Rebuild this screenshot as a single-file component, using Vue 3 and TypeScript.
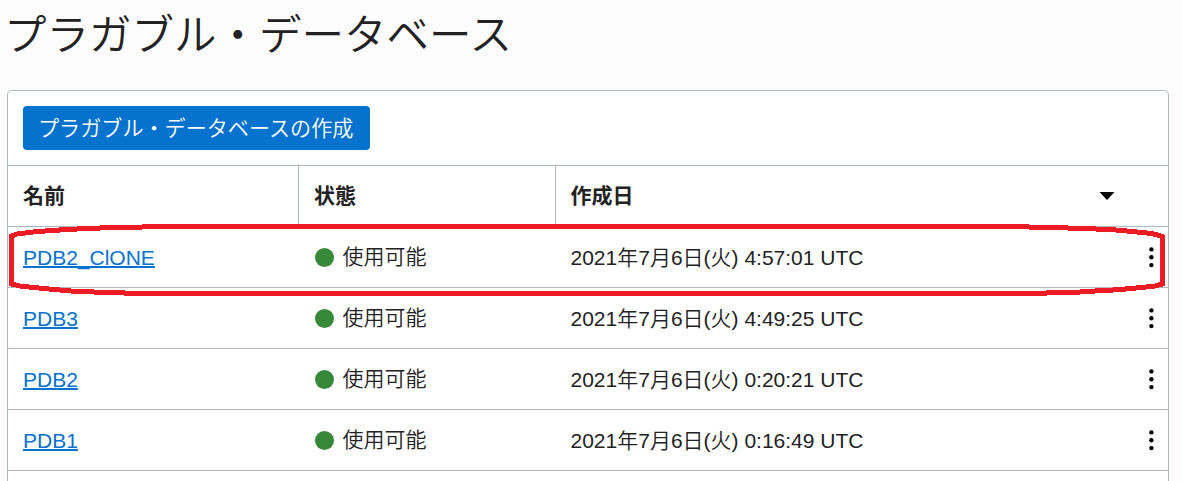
<script setup lang="ts">
interface PluggableDatabase {
  name: string
  state: string
  created: string
}

const databases: PluggableDatabase[] = [
  { name: 'PDB2_ClONE', state: '使用可能', created: '2021年7月6日(火) 4:57:01 UTC' },
  { name: 'PDB3', state: '使用可能', created: '2021年7月6日(火) 4:49:25 UTC' },
  { name: 'PDB2', state: '使用可能', created: '2021年7月6日(火) 0:20:21 UTC' },
  { name: 'PDB1', state: '使用可能', created: '2021年7月6日(火) 0:16:49 UTC' },
]
</script>

<template>
  <main class="page">
    <h1 class="title">プラガブル・データベース</h1>
    <section class="card">
      <div class="toolbar">
        <button class="create" type="button">プラガブル・データベースの作成</button>
      </div>
      <div class="row head">
        <div class="cell">名前</div>
        <div class="cell">状態</div>
        <div class="cell">
          <span>作成日</span>
          <svg class="sort" width="16" height="8" viewBox="0 0 16 8"><path d="M0.5 0H15.5L8 8Z" /></svg>
        </div>
      </div>
      <div v-for="db in databases" :key="db.name" class="row">
        <div class="cell"><a class="link" href="#">{{ db.name }}</a></div>
        <div class="cell"><span class="dot"></span><span class="state">{{ db.state }}</span></div>
        <div class="cell">
          <span class="date">{{ db.created }}</span>
          <svg class="menu" width="6" height="22" viewBox="0 0 6 22">
            <circle cx="3.4" cy="3.4" r="2.2" />
            <circle cx="3.4" cy="11.3" r="2.2" />
            <circle cx="3.4" cy="19.1" r="2.2" />
          </svg>
        </div>
      </div>
    </section>
    <svg class="highlight" width="1183" height="481" viewBox="0 0 1183 481">
      <path
        d="M11.5 236L17 234L33 232L45 231L70 229.3L100 228L143 227L144 226.5H1027L1028 227L1068 228L1110 229.5L1130 231.3L1147 233L1155 234.2L1162.5 236.5V284L1155 286L1143 287.3L1130 288.6L1118 289.7L1100 290.7L1080 292L1046 293L1045 293.5H126L125 293L94 292L71 291L55 289.6L42 288.3L32 287.3L20 286L11.5 284Z"
      />
    </svg>
  </main>
</template>

<style>
body {
  margin: 0;
  background: #fcfcfc;
}
</style>

<style scoped>
.page {
  position: relative;
  box-sizing: border-box;
  width: 1183px;
  height: 481px;
  padding-left: 7px;
  overflow: hidden;
  background: #fcfcfc;
  color: #222;
  font-family: "Liberation Sans", "Noto Sans CJK JP", sans-serif;
  font-size: 21px;
  font-weight: 350;
}
.title {
  height: 90px;
  margin: 0 0 0 -3px;
  font-size: 42.5px;
  font-weight: 350;
  line-height: 72px;
  white-space: nowrap;
}
.card {
  box-sizing: border-box;
  width: 1162px;
  height: 410px;
  border: 1px solid #b1b7c1;
  border-radius: 5px;
  background: #fff;
}
.toolbar {
  box-sizing: border-box;
  height: 74px;
  padding: 15px;
}
.create {
  display: block;
  width: 347px;
  height: 44px;
  padding: 1px 0 0 15px;
  border: 0;
  border-radius: 4px;
  background: #0572ce;
  color: #fff;
  font: inherit;
  font-size: 21.1px;
  line-height: 44px;
  text-align: left;
  white-space: nowrap;
}
.row {
  display: grid;
  grid-template-columns: 290px 257px 1fr;
  box-sizing: border-box;
  height: 61px;
  border-top: 1px solid #b1b7c1;
  line-height: 60px;
}
.row:last-child {
  height: 62px;
  border-bottom: 1px solid #b1b7c1;
}
.cell {
  display: flex;
  align-items: center;
  height: 60px;
  padding-left: 15px;
  white-space: nowrap;
}
.cell + .cell {
  padding-left: 17px;
}
.cell:nth-child(3) {
  justify-content: space-between;
  padding-left: 15.5px;
}
.head {
  font-weight: 700;
}
.head .cell + .cell {
  padding-left: 15px;
  border-left: 1px solid #b1b7c1;
}
.head .cell:nth-child(3) {
  padding-left: 14.5px;
}
.sort {
  margin-right: 53px;
}
.link {
  padding-top: 2px;
  color: #0572ce;
  text-decoration: underline;
  text-decoration-thickness: 2px;
  text-underline-offset: 1px;
}
.date {
  padding-top: 2px;
}
.dot {
  width: 19px;
  height: 19px;
  border-radius: 50%;
  background: #378839;
}
.state {
  margin-left: 8.5px;
}
.menu {
  margin-right: 14px;
  overflow: visible;
}
.highlight {
  position: absolute;
  top: 0;
  left: 0;
  fill: none;
  stroke: #ed1c24;
  stroke-width: 5;
  stroke-linejoin: round;
  shape-rendering: crispEdges;
  pointer-events: none;
}
</style>
